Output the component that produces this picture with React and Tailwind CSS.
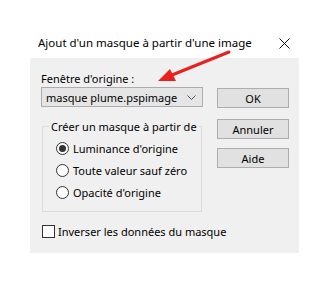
import React from "react";

const font = { fontFamily: '"Noto Sans", "Open Sans", sans-serif' };

function Radio({ checked, label }) {
  return (
    <div className="flex items-center h-[22px]">
      <span className="w-[13px] h-[13px] rounded-full border border-[#333] bg-white flex items-center justify-center shrink-0">
        {checked && <span className="w-[7px] h-[7px] rounded-full bg-[#333]" />}
      </span>
      <span className="ml-[4px] whitespace-nowrap">{label}</span>
    </div>
  );
}

function Button({ children, className = "" }) {
  return (
    <button className={`w-[72px] h-[20px] bg-[#e1e1e1] border border-[#adadad] flex items-center justify-center ${className}`}>
      {children}
    </button>
  );
}

export default function App() {
  return (
    <div className="relative w-[329px] h-[283px] bg-white text-[11px] text-black leading-[15px] whitespace-nowrap" style={font}>
      {/* title bar */}
      <div className="flex items-start h-[58px] pl-[38px] pr-[39px] pt-[35px]">
        <span className="text-[11.5px] leading-[16px] flex-1">Ajout d'un masque à partir d'une image</span>
        <svg className="mt-[3px]" width="11" height="11" viewBox="0 0 11 11">
          <path d="M0.5 0.5 L10.5 10.5 M10.5 0.5 L0.5 10.5" stroke="#111" strokeWidth="1" />
        </svg>
      </div>

      {/* body */}
      <div className="ml-[30px] w-[269px] h-[195px] bg-[#f0f0f0] pl-[11px] pt-[13px]">
        <div className="flex">
          <div className="w-[162px]">
            <div className="h-[16px]">Fenêtre d'origine :</div>
            <div className="h-[20px] bg-[#e5e5e5] border border-[#adadad] flex items-center pl-[4px] pr-[6px]">
              <span className="flex-1">masque plume.pspimage</span>
              <svg width="9" height="5" viewBox="0 0 9 5">
                <path d="M0.5 0.5 L4.5 4.5 L8.5 0.5" fill="none" stroke="#555" strokeWidth="1" />
              </svg>
            </div>
            <fieldset className="mt-[12px] ml-[1px] w-[160px] min-w-0 h-[93px] border border-[#dcdcdc] px-0 pt-[3px]">
              <legend className="ml-[6px] px-[2px]">Créer un masque à partir de</legend>
              <div className="pl-[13px]">
                <Radio checked label="Luminance d'origine" />
                <Radio label="Toute valeur sauf zéro" />
                <Radio label="Opacité d'origine" />
              </div>
            </fieldset>
          </div>
          <div className="ml-[14px] pt-[17px] flex flex-col">
            <Button>OK</Button>
            <Button className="mt-[11px]">Annuler</Button>
            <Button className="mt-[9px]">Aide</Button>
          </div>
        </div>
        <div className="flex items-center mt-[12px] ml-[1px]">
          <span className="w-[13px] h-[13px] border border-[#333] bg-white" />
          <span className="ml-[3px]">Inverser les données du masque</span>
        </div>
      </div>

      {/* annotation arrow */}
      <svg className="absolute left-0 top-0" width="329" height="283" viewBox="0 0 329 283">
        <path d="M229 52 L172 75" stroke="#e8201f" strokeWidth="3" strokeLinecap="round" />
        <path d="M158 81 L170 69 L176 81 Z" fill="#e8201f" />
      </svg>
    </div>
  );
}
